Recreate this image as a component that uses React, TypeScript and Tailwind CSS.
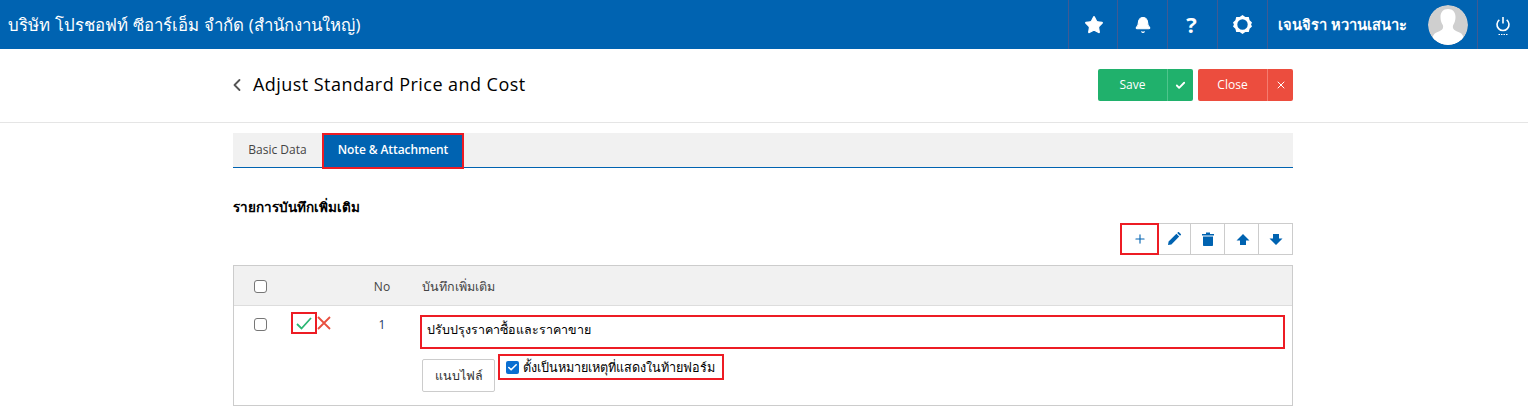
import { Star, Bell, ChevronLeft, Plus, X, Check } from 'lucide-react';

const FONT = "font-['Open_Sans','Noto_Sans',sans-serif]";

function NavCell({ children }: { children: React.ReactNode }) {
  return <div className="w-[50px] h-full flex items-center justify-center border-l border-[#3f5a94] text-white">{children}</div>;
}

function Gear() {
  return (
    <svg width="19" height="19" viewBox="0 0 20 20">
      <path fill="#fff" fillRule="evenodd" d="M10 0l3 2.200 3.600-.1.900 3.500L20 8l-1 2 1 2-2.500 2.400-.9 3.500-3.600-.1L10 20l-3-2.200-3.600.1-.9-3.500L0 12l1-2-1-2 2.500-2.400.9-3.500 3.600.1zM10 4.500a5.500 5.500 0 100 11 5.500 5.500 0 000-11z" />
    </svg>
  );
}

function PowerIcon() {
  return (
    <svg width="16" height="20" viewBox="0 0 16 20" fill="none" stroke="#fff" className="mt-[2px]">
      <path strokeWidth="1.600" d="M8 1v6.500M4.300 3.800a6 6 0 107.400 0" />
      <path strokeWidth="1" strokeDasharray="1.500 1" d="M3.500 18.500h9" />
    </svg>
  );
}

function Avatar() {
  return (
    <svg width="40" height="40" viewBox="0 0 40 40" className="rounded-full">
      <circle cx="20" cy="20" r="20" fill="#cfcfcf" />
      <path fill="#fff" d="M20 4c-5 0-7.500 3.500-7.500 8 0 3 .8 5.500 2 7.500.6 1 .8 2 .5 3.500-.6 2.500-5 3.500-7.500 5-1.500 1-2.500 2.500-3 4.500 3.500 4.500 9.500 7.500 15.500 7.500s12-3 15.500-7.500c-.5-2-1.500-3.500-3-4.500-2.500-1.500-6.900-2.500-7.500-5-.3-1.500-.1-2.500.5-3.500 1.200-2 2-4.500 2-7.500 0-4.500-2.500-8-7.500-8z" />
    </svg>
  );
}

function ToolButton({ children, active }: { children: React.ReactNode; active?: boolean }) {
  return (
    <div className={active
      ? 'w-[39px] h-[32px] -mr-[2px] flex items-center justify-center bg-white border-2 border-[#ed1c24] relative z-10 text-[#0063b1]'
      : 'w-[35px] h-[32px] flex items-center justify-center bg-white border border-[#cccccc] -ml-px text-[#0063b1]'}>
      {children}
    </div>
  );
}

function Box() {
  return <span className="block w-[13px] h-[13px] rounded-[3px] border border-[#767676] bg-white" />;
}

export default function App() {
  return (
    <div className={`${FONT} w-[1528px] h-[416px] overflow-hidden bg-white text-[#222]`}>
      <header className="h-[49px] bg-[#0063b1] flex items-center text-white">
        <div className="pl-[8px] text-[16.800px] tracking-[0.090px] flex-1">บริษัท โปรชอฟท์ ซีอาร์เอ็ม จำกัด (สำนักงานใหญ่)</div>
        <div className="flex items-center h-full">
          <div className="w-[49px] h-full flex items-center justify-center border-l border-[#3f5a94] text-white pl-[2px]"><Star size={20} fill="#fff" strokeWidth={1.5} /></div>
          <NavCell><Bell size={18} fill="#fff" strokeWidth={1.5} /></NavCell>
          <NavCell><span className="text-[22px] font-bold -ml-[2px]">?</span></NavCell>
          <NavCell><Gear /></NavCell>
          <div className="h-full border-l border-[#3f5a94] pl-[10px] w-[210px] flex items-center">
            <span className="text-[14.700px] font-semibold w-[150px] whitespace-nowrap">เจนจิรา หวานเสนาะ</span>
            <Avatar />
          </div>
          <div className="w-[51px] h-full border-l border-[#3f5a94] flex items-center justify-center">
            <PowerIcon />
          </div>
        </div>
      </header>

      <div className="h-[74px] border-b border-[#e5e5e5]">
        <div className="w-[1060px] ml-[233px] h-[72px] flex items-center justify-between">
          <div className="flex items-center gap-[6px]">
            <ChevronLeft size={20} className="text-[#555] -ml-[6px]" strokeWidth={2.200} />
            <h1 className="text-[18px] text-black tracking-[0.450px] pb-[2px]">Adjust Standard Price and Cost</h1>
          </div>
          <div className="flex gap-[5px] text-white text-[12px] font-medium">
            <div className="flex h-[32px] w-[95px] rounded-[2px] bg-[#20b16c]">
              <span className="w-[69px] flex items-center justify-center">Save</span>
              <span className="flex-1 border-l border-[#4fc48c] flex items-center justify-center"><Check size={11} strokeWidth={4} /></span>
            </div>
            <div className="flex h-[32px] w-[95px] rounded-[2px] bg-[#ec4d3e]">
              <span className="w-[69px] flex items-center justify-center">Close</span>
              <span className="flex-1 border-l border-[#f47c70] flex items-center justify-center"><X size={12} strokeWidth={2} /></span>
            </div>
          </div>
        </div>
      </div>

      <main className="w-[1060px] ml-[233px] pt-[10px]">
        <div className="h-[35px] bg-[#f1f1f1] border-b border-[#0063b1] flex items-stretch text-[12px]">
          <div className="w-[89px] flex items-center justify-center text-[#444]">Basic Data</div>
          <div className="w-[142px] h-[36px] bg-[#0063b1] border-2 border-[#ed1c24] text-white font-semibold flex items-center justify-center tracking-[-0.100px] pb-[2px]">Note &amp; Attachment</div>
        </div>

        <h2 className="mt-[30px] h-[20px] leading-[18px] text-[13.500px] font-bold text-black">รายการบันทึกเพิ่มเติม</h2>

        <div className="mt-[5px] flex justify-end">
          <ToolButton active><Plus size={14} strokeWidth={1.900} /></ToolButton>
          <ToolButton>
            <svg width="14" height="14" viewBox="0 0 14 14"><path fill="currentColor" d="M1 13l.6-3.400L9.400 1.800l2.800 2.800-7.800 7.800zM10.200 1l.8-.8c.3-.3.7-.3 1 0l1.800 1.800c.3.300.3.700 0 1l-.8.800z" /></svg>
          </ToolButton>
          <ToolButton>
            <svg width="12" height="14" viewBox="0 0 12 14"><path fill="currentColor" d="M0 2h4V.6h4V2h4v1.400H0zM1 4.400h10V13c0 .6-.4 1-1 1H2c-.6 0-1-.4-1-1z" /></svg>
          </ToolButton>
          <ToolButton>
            <svg width="14" height="13" viewBox="0 0 14 13" className="ml-[2px]"><path fill="currentColor" d="M7 1l6.500 6.500H10V12H4V7.500H.5z" /></svg>
          </ToolButton>
          <ToolButton>
            <svg width="14" height="13" viewBox="0 0 14 13" className="ml-[1px]"><path fill="currentColor" d="M7 12L.5 5.500H4V1h6v4.500h3.500z" /></svg>
          </ToolButton>
        </div>

        <div className="mt-[10px] h-[141px] border border-[#cccccc] text-[12px]">
          <div className="h-[40px] bg-[#f1f1f1] border-b border-[#dddddd] flex items-center text-[#444]">
            <div className="w-[20px]" />
            <div className="mt-px"><Box /></div>
            <div className="w-[95px]" />
            <div className="w-[40px] text-center pt-[3px]">No</div>
            <div className="ml-[20px] text-[12.500px] pt-[3px]">บันทึกเพิ่มเติม</div>
          </div>
          <div className="flex">
            <div className="w-[20px]" />
            <div className="pt-[12px]"><Box /></div>
            <div className="w-[24px]" />
            <div className="pt-[6px] flex items-start">
              <div className="w-[26px] h-[22px] border-2 border-[#ed1c24] flex items-center justify-center">
                <svg width="16" height="13" viewBox="0 0 16 13" fill="none" stroke="#2bb673" strokeWidth="1.800"><path d="M1 7l4.500 4.500L15 1" /></svg>
              </div>
              <svg width="14" height="14" viewBox="0 0 14 14" fill="none" stroke="#e8503f" strokeWidth="1.800" className="mt-[4px]"><path d="M1 1l12 12M13 1L1 13" /></svg>
            </div>
            <div className="w-[28px]" />
            <div className="w-[40px] text-center pt-[10px] pl-[6px] text-[#1f3d66]">1</div>
            <div className="ml-[21px] flex-1 pr-[7px] pt-[9px]">
              <div className="h-[34px] border-2 border-[#ed1c24] flex items-center pl-[5px] pb-[4px] font-medium text-[12.500px] text-black">ปรับปรุงราคาซื้อและราคาขาย</div>
              <div className="flex mt-[5px] items-start">
                <div className="ml-[2px] w-[73px] h-[33px] mt-[5px] pt-[2px] border border-[#cccccc] rounded-[2px] flex items-center justify-center text-[#333] text-[12.500px]">แนบไฟล์</div>
                <div className="ml-[3px] h-[26px] w-[226px] border-2 border-[#ed1c24] flex items-center pl-[6px] gap-[4px] text-black">
                  <span className="w-[13px] h-[13px] rounded-[2px] bg-[#0a6ed1] flex items-center justify-center text-white"><Check size={11} strokeWidth={3.5} /></span>
                  <span className="whitespace-nowrap text-[12.600px] pt-[3px]">ตั้งเป็นหมายเหตุที่แสดงในท้ายฟอร์ม</span>
                </div>
              </div>
            </div>
          </div>
        </div>
      </main>
    </div>
  );
}
